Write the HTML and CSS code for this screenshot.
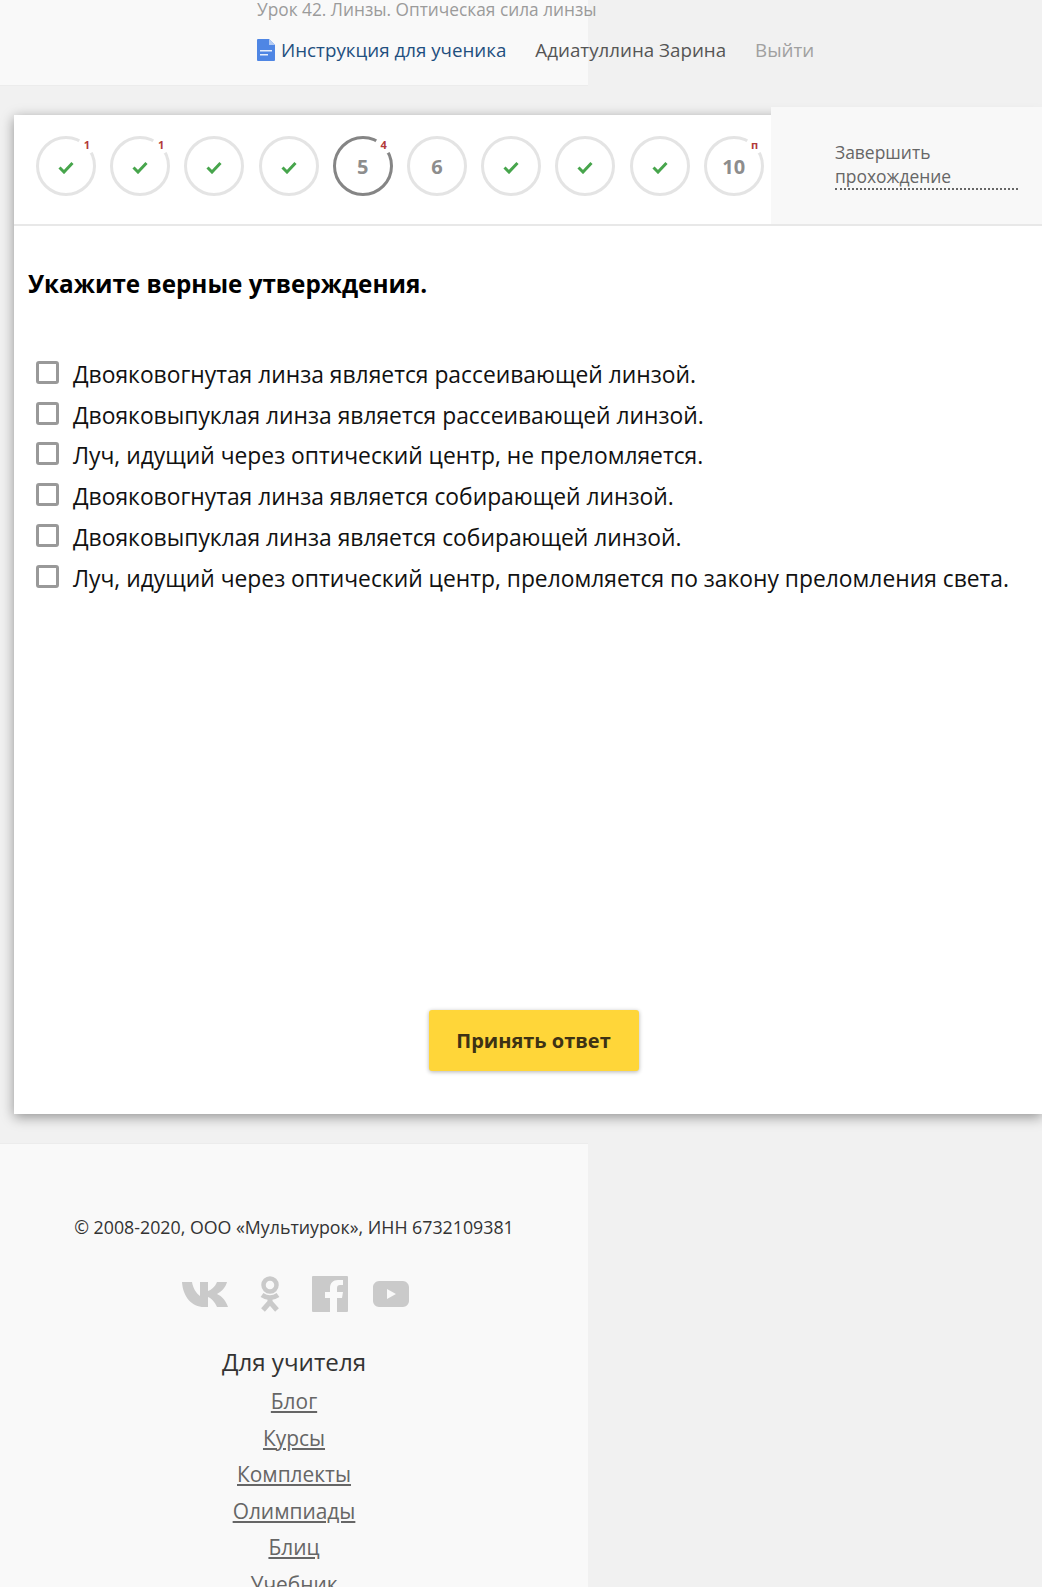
FILE: index.html
```html
<!DOCTYPE html>
<html lang="en">

<head>
    <meta charset="UTF-8">
    <meta name="viewport" content="width=device-width, initial-scale=1.0">
    <title>Урок 42. Линзы. Оптическая сила линзы</title>
    <link rel="stylesheet" href="styles.css">
</head>

<body>
    <header class="top-panel">
        <div class="lesson-title">Урок 42. Линзы. Оптическая сила линзы</div>
        <nav class="top-nav">
            <a class="guide-link">
                <svg class="doc-icon" viewBox="0 0 18 22">
                    <path d="M1 0h11l6 6v15a1 1 0 0 1-1 1H1a1 1 0 0 1-1-1V1a1 1 0 0 1 1-1z" fill="#4f86e4"/>
                    <path d="M12 0l6 6h-6z" fill="#b4ccf4"/>
                    <path d="M3 11h12v1.6H3zM3 15h8v1.6H3z" fill="#e6eefc"/>
                </svg>
                Инструкция для ученика
            </a>
            <span class="user-name">Адиатуллина Зарина</span>
            <a class="logout">Выйти</a>
        </nav>
    </header>

    <main class="test-card">
        <div class="steps-row">
            <ul class="steps">
                <li class="step"><svg class="check" viewBox="0 0 16 13"><path d="M1.5 6.5l4.5 4.5 8.5-9"/></svg><span class="step-badge">1</span></li>
                <li class="step"><svg class="check" viewBox="0 0 16 13"><path d="M1.5 6.5l4.5 4.5 8.5-9"/></svg><span class="step-badge">1</span></li>
                <li class="step"><svg class="check" viewBox="0 0 16 13"><path d="M1.5 6.5l4.5 4.5 8.5-9"/></svg></li>
                <li class="step"><svg class="check" viewBox="0 0 16 13"><path d="M1.5 6.5l4.5 4.5 8.5-9"/></svg></li>
                <li class="step step-current">5<span class="step-badge">4</span></li>
                <li class="step">6</li>
                <li class="step"><svg class="check" viewBox="0 0 16 13"><path d="M1.5 6.5l4.5 4.5 8.5-9"/></svg></li>
                <li class="step"><svg class="check" viewBox="0 0 16 13"><path d="M1.5 6.5l4.5 4.5 8.5-9"/></svg></li>
                <li class="step"><svg class="check" viewBox="0 0 16 13"><path d="M1.5 6.5l4.5 4.5 8.5-9"/></svg></li>
                <li class="step">10<span class="step-badge">п</span></li>
            </ul>
            <div class="finish-panel">
                <a class="finish-link">Завершить прохождение</a>
            </div>
        </div>

        <h2 class="question">Укажите верные утверждения.</h2>

        <ul class="answers">
            <li class="answer"><span class="checkbox"></span>Двояковогнутая линза является рассеивающей линзой.</li>
            <li class="answer"><span class="checkbox"></span>Двояковыпуклая линза является рассеивающей линзой.</li>
            <li class="answer"><span class="checkbox"></span>Луч, идущий через оптический центр, не преломляется.</li>
            <li class="answer"><span class="checkbox"></span>Двояковогнутая линза является собирающей линзой.</li>
            <li class="answer"><span class="checkbox"></span>Двояковыпуклая линза является собирающей линзой.</li>
            <li class="answer"><span class="checkbox"></span>Луч, идущий через оптический центр, преломляется по закону преломления света.</li>
        </ul>

        <button class="submit-btn">Принять ответ</button>
    </main>

    <footer class="site-footer">
        <p class="copyright">© 2008-2020, ООО «Мультиурок», ИНН 6732109381</p>
        <div class="socials">
            <svg class="social-vk" viewBox="0 0 46 26"><path d="M0 1h10c1 6 4 11 8 14V1h8v9c3-1 7-4 9-9h10c-1 5-6 10-10 12 5 2 9 7 11 13H35c-2-5-6-9-9-10v10h-4C10 26 1 16 0 1z"/></svg>
            <svg class="social-ok" viewBox="0 0 22 36">
                <circle cx="11" cy="9" r="6.5" fill="none" stroke-width="4.5"/>
                <path d="M3 19c5 3.4 11 3.4 16 0M11 22v3M4 34l7-8 7 8" fill="none" stroke-width="5"/>
            </svg>
            <svg class="social-fb" viewBox="0 0 36 36"><path fill-rule="evenodd" d="M1 0h34a1 1 0 0 1 1 1v34a1 1 0 0 1-1 1H25V22h5l1-6h-6v-4c0-2 1-3 3-3h3V4h-5c-5 0-8 3-8 8v4h-5v6h5v14H1a1 1 0 0 1-1-1V1a1 1 0 0 1 1-1z"/></svg>
            <svg class="social-yt" viewBox="0 0 36 26"><path fill-rule="evenodd" d="M6 0h24c3 0 6 3 6 6v14c0 3-3 6-6 6H6c-3 0-6-3-6-6V6c0-3 3-6 6-6zm8 8v10l9-5z"/></svg>
        </div>
        <h3 class="footer-heading">Для учителя</h3>
        <ul class="footer-links">
            <li><a>Блог</a></li>
            <li><a>Курсы</a></li>
            <li><a>Комплекты</a></li>
            <li><a>Олимпиады</a></li>
            <li><a>Блиц</a></li>
            <li><a>Учебник</a></li>
        </ul>
    </footer>
</body>

</html>
```

FILE: styles.css
```css
* {
    padding: 0;
    margin: 0;
    box-sizing: border-box;
}

html,
body {
    height: 1587px;
    overflow: hidden;
}

body {
    background-color: #f1f1f1;
    font-family: "Open Sans", "Noto Sans", sans-serif;
    color: #000;
}

ul {
    list-style: none;
}

.top-panel {
    display: flow-root;
    width: 588px;
    height: 86px;
    padding-left: 257px;
    background-color: #f9f9f9;
    border-bottom: 1px solid #ececec;
    white-space: nowrap;
}

.lesson-title {
    margin-top: -2px;
    font-size: 17.3px;
    line-height: 24px;
    color: #9b9b9b;
}

.top-nav {
    display: flex;
    align-items: center;
    margin-top: 14px;
    font-size: 18.75px;
    line-height: 28px;
}

.guide-link {
    display: flex;
    align-items: center;
    gap: 6px;
    color: #1f4f7f;
    margin-right: 29px;
}

.doc-icon {
    width: 18px;
    height: 22px;
}

.user-name {
    color: #555;
    margin-right: 29px;
}

.logout {
    color: #a0a0a0;
}

.test-card {
    display: flex;
    flex-direction: column;
    height: 999px;
    margin: 29px 0 0 14px;
    background-color: #fff;
    box-shadow: 0 3px 12px rgba(0, 0, 0, 0.4);
}

.steps-row {
    display: flex;
    height: 111px;
    border-bottom: 2px solid #e8e8e8;
}

.steps {
    display: flex;
    width: 757px;
    gap: 14.2px;
    padding: 21px 0 0 22px;
}

.step {
    position: relative;
    display: flex;
    align-items: center;
    justify-content: center;
    width: 60px;
    height: 60px;
    border: 3px solid #e4e4e4;
    border-radius: 50%;
    font-size: 20px;
    font-weight: 700;
    color: #8d8d8d;
}

.step-current {
    border-color: #858585;
}

.step-badge {
    position: absolute;
    top: -3px;
    right: -3px;
    width: 18px;
    height: 18px;
    border-radius: 50%;
    background-color: #fff;
    font-size: 11px;
    line-height: 18px;
    text-align: center;
    color: #b23a3a;
}

.check {
    width: 16px;
    height: 13px;
    margin-top: 2px;
    fill: none;
    stroke: #47a54c;
    stroke-width: 3;
}

.finish-panel {
    flex: 1;
    margin-top: -8px;
    padding: 33px 24px 0 64px;
    background-color: #f8f8f8;
    position: relative;
}

.finish-link {
    display: block;
    font-size: 17.45px;
    line-height: 24px;
    color: #666;
    border-bottom: 2px dotted #666;
}

.question {
    margin: 41px 0 0 14px;
    font-size: 24.25px;
    line-height: 33px;
    font-weight: 700;
}

.answers {
    margin: 54px 0 0 22px;
}

.answer {
    display: flex;
    align-items: center;
    gap: 14px;
    height: 40.8px;
    font-size: 22.83px;
    color: #111;
    white-space: nowrap;
}

.checkbox {
    flex: none;
    width: 23px;
    height: 23px;
    margin-bottom: 4px;
    border: 3px solid #999;
    border-radius: 3px;
    background-color: #fff;
}

.submit-btn {
    align-self: center;
    width: 210px;
    height: 61px;
    margin: auto 0 43px 11px;
    border: none;
    border-radius: 3px;
    background-color: #ffd639;
    box-shadow: 0 1px 4px rgba(0, 0, 0, 0.3);
    font-family: inherit;
    font-size: 20px;
    font-weight: 700;
    color: #3d3214;
}

.site-footer {
    width: 588px;
    margin-top: 29px;
    padding-top: 69px;
    background-color: #f9f9f9;
    border-top: 1px solid #ececec;
    text-align: center;
}

.copyright {
    font-size: 17.8px;
    line-height: 28px;
    color: #333;
}

.socials {
    display: flex;
    align-items: center;
    justify-content: center;
    margin-top: 35px;
    padding-left: 2px;
    fill: #cacaca;
}

.social-vk {
    width: 46px;
    height: 26px;
    margin-right: 31px;
}

.social-ok {
    width: 22px;
    height: 36px;
    margin-right: 31px;
    stroke: #cacaca;
}

.social-fb {
    width: 36px;
    height: 36px;
    margin-right: 25px;
}

.social-yt {
    width: 36px;
    height: 26px;
}

.footer-heading {
    margin-top: 33px;
    font-size: 24.15px;
    line-height: 33px;
    font-weight: 400;
    color: #333;
}

.footer-links {
    margin-top: 5px;
    font-size: 20.9px;
    line-height: 36.5px;
    color: #666;
}

.footer-links a {
    text-decoration: underline;
}
```
